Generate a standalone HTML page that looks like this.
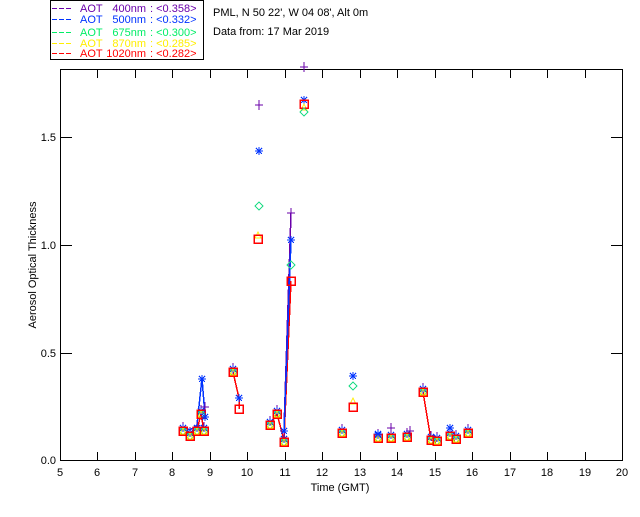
<!DOCTYPE html>
<html><head><meta charset="utf-8"><style>
body{margin:0;background:#fff;width:640px;height:512px;overflow:hidden}
text{font-family:"Liberation Sans",sans-serif;font-size:11px}
</style></head><body>
<svg width="640" height="512" viewBox="0 0 640 512" xmlns="http://www.w3.org/2000/svg" shape-rendering="crispEdges">
<defs>
<g id="p"><path d="M-4 0H4M0 -5V5" stroke="#6a00aa" fill="none"/></g>
<g id="s"><path d="M-4 0H4M0 -4V4M-3 -3L3 3M-3 3L3 -3" stroke="#0033ff" stroke-width="1.2" fill="none"/></g>
<g id="d"><path d="M0 -4L4 0L0 4L-4 0Z" stroke="#22dd88" fill="none"/></g>
<g id="t"><path d="M-3 3L0 -3L3 3Z" stroke="#ffee00" fill="none"/></g>
<g id="q"><rect x="-4" y="-4" width="8" height="8" stroke="#ff0000" stroke-width="1.5" fill="none"/></g>
<g id="all"><use href="#p" y="-4"/><use href="#s" y="-3"/><use href="#d"/><use href="#t"/><use href="#q"/></g>
</defs>
<!-- legend -->
<rect x="50.5" y="0.5" width="153" height="59" fill="none" stroke="#000"/>
<g stroke-dasharray="5,2" stroke-width="1">
<path d="M52 8.5H73" stroke="#6a00aa"/>
<path d="M52 19.5H73" stroke="#0033ff"/>
<path d="M52 32.5H73" stroke="#00ee66"/>
<path d="M52 43.5H73" stroke="#ffee00"/>
<path d="M52 53.5H73" stroke="#ff0000"/>
</g>
<g>
<text x="80" y="12" fill="#6a00aa">AOT</text><text x="146" y="12" fill="#6a00aa" text-anchor="end">400nm</text><text x="150" y="12" fill="#6a00aa">: &lt;0.358&gt;</text>
<text x="80" y="23" fill="#0033ff">AOT</text><text x="146" y="23" fill="#0033ff" text-anchor="end">500nm</text><text x="150" y="23" fill="#0033ff">: &lt;0.332&gt;</text>
<text x="80" y="36" fill="#00ee66">AOT</text><text x="146" y="36" fill="#00ee66" text-anchor="end">675nm</text><text x="150" y="36" fill="#00ee66">: &lt;0.300&gt;</text>
<text x="80" y="47" fill="#ffee00">AOT</text><text x="146" y="47" fill="#ffee00" text-anchor="end">870nm</text><text x="150" y="47" fill="#ffee00">: &lt;0.285&gt;</text>
<text x="80" y="57" fill="#ff0000">AOT</text><text x="146" y="57" fill="#ff0000" text-anchor="end">1020nm</text><text x="150" y="57" fill="#ff0000">: &lt;0.282&gt;</text>
</g>
<text x="213" y="16" fill="#000">PML, N 50 22', W 04 08', Alt 0m</text>
<text x="213" y="35" fill="#000">Data from: 17 Mar 2019</text>
<!-- axes -->
<rect x="60.5" y="69.5" width="562" height="391" fill="none" stroke="#000"/>
<g stroke="#000">
<path d="M97.5 461V452M135.5 461V452M172.5 461V452M210.5 461V452M247.5 461V452M285.5 461V452M322.5 461V452M360.5 461V452M397.5 461V452M435.5 461V452M472.5 461V452M510.5 461V452M547.5 461V452M585.5 461V452"/>
<path d="M97.5 69V78M135.5 69V78M172.5 69V78M210.5 69V78M247.5 69V78M285.5 69V78M322.5 69V78M360.5 69V78M397.5 69V78M435.5 69V78M472.5 69V78M510.5 69V78M547.5 69V78M585.5 69V78"/>
<path d="M60 353.5H72M60 245.5H72M60 137.5H72M611 353.5H622M611 245.5H622M611 137.5H622"/>
</g>
<g fill="#000" text-anchor="middle">
<text x="60" y="476">5</text><text x="97" y="476">6</text><text x="135" y="476">7</text><text x="172" y="476">8</text><text x="210" y="476">9</text><text x="247" y="476">10</text><text x="285" y="476">11</text><text x="322" y="476">12</text><text x="360" y="476">13</text><text x="397" y="476">14</text><text x="435" y="476">15</text><text x="472" y="476">16</text><text x="510" y="476">17</text><text x="547" y="476">18</text><text x="585" y="476">19</text><text x="622" y="476">20</text>
<text x="340" y="491">Time (GMT)</text>
</g>
<g fill="#000" text-anchor="end">
<text x="56" y="464">0.0</text><text x="56" y="357">0.5</text><text x="56" y="249">1.0</text><text x="56" y="141">1.5</text>
</g>
<text transform="translate(36,265) rotate(-90)" text-anchor="middle" fill="#000">Aerosol Optical Thickness</text>
<!-- lines -->
<g fill="none" stroke-width="1.5">
<path d="M183 427L190 430L197 425L202 378L205 416" stroke="#0033ff"/>
<path d="M197 430L201 414L204 431" stroke="#ff0000"/>
<path d="M233 372L239 398L239 409" stroke="#ff0000"/>
<path d="M270 425L277 414L284 440L291 281" stroke="#ff0000"/>
<path d="M284 428L291 213" stroke="#6a00aa"/>
<path d="M284 432L291 240" stroke="#0033ff"/>
<path d="M423 392L431 440L437 441" stroke="#ff0000"/>
</g>
<!-- markers -->
<use href="#all" x="183" y="431"/><use href="#all" x="190" y="436"/><use href="#all" x="197" y="431"/>
<use href="#all" x="204" y="431"/><use href="#all" x="201" y="414"/>
<use href="#s" x="202" y="379"/><use href="#p" x="205" y="407"/><use href="#s" x="205" y="417"/>
<use href="#all" x="233" y="372"/><use href="#s" x="239" y="398"/><use href="#q" x="239" y="409"/>
<use href="#p" x="259" y="105"/><use href="#s" x="259" y="151"/><use href="#d" x="259" y="206"/><use href="#t" x="258" y="235"/><use href="#q" x="258" y="239"/>
<use href="#all" x="270" y="425"/><use href="#all" x="277" y="414"/>
<use href="#s" x="284" y="431"/><use href="#all" x="284" y="442"/>
<use href="#p" x="291" y="213"/><use href="#s" x="291" y="240"/><use href="#d" x="291" y="265"/><use href="#q" x="291" y="281"/>
<use href="#p" x="304" y="67"/><use href="#s" x="304" y="100"/><use href="#t" x="304" y="107"/><use href="#q" x="304" y="104"/><use href="#d" x="304" y="112"/>
<use href="#all" x="342" y="433"/>
<use href="#s" x="353" y="376"/><use href="#d" x="353" y="386"/><use href="#t" x="353" y="401"/><use href="#q" x="353" y="407"/>
<use href="#all" x="378" y="438"/><use href="#s" x="378" y="434"/>
<use href="#all" x="391" y="438"/><use href="#p" x="391" y="428"/>
<use href="#all" x="407" y="437"/><use href="#p" x="410" y="431"/>
<use href="#all" x="423" y="392"/>
<use href="#all" x="431" y="440"/><use href="#all" x="437" y="441"/>
<use href="#all" x="450" y="436"/><use href="#s" x="450" y="428"/>
<use href="#all" x="456" y="439"/><use href="#all" x="468" y="433"/>
</svg>
</body></html>
